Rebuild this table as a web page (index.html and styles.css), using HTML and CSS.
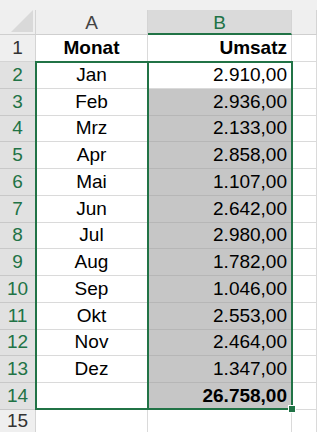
FILE: index.html
```html
<!DOCTYPE html>
<html lang="de">
<head>
<meta charset="utf-8">
<title>Umsatz</title>
<link rel="stylesheet" href="styles.css">
</head>
<body>
<div class="wrap">
  <div class="sheet">
    <div class="strip"></div>

    <div class="corner"><svg class="tri" width="22" height="22" viewBox="0 0 22 22"><polygon points="22,0 22,22 0,22" fill="#d9d9d9"/></svg></div>
    <div class="colhead">A</div>
    <div class="colhead sel">B</div>
    <div class="colhead"></div>

    <div class="rowhead">1</div>
    <div class="cell c b hline">Monat</div>
    <div class="cell r b hline">Umsatz</div>
    <div class="cell"></div>

    <div class="rowhead on">2</div><div class="cell c">Jan</div><div class="cell r">2.910,00</div><div class="cell"></div>
    <div class="rowhead on">3</div><div class="cell c">Feb</div><div class="cell r g">2.936,00</div><div class="cell"></div>
    <div class="rowhead on">4</div><div class="cell c">Mrz</div><div class="cell r g">2.133,00</div><div class="cell"></div>
    <div class="rowhead on">5</div><div class="cell c">Apr</div><div class="cell r g">2.858,00</div><div class="cell"></div>
    <div class="rowhead on">6</div><div class="cell c">Mai</div><div class="cell r g">1.107,00</div><div class="cell"></div>
    <div class="rowhead on">7</div><div class="cell c">Jun</div><div class="cell r g">2.642,00</div><div class="cell"></div>
    <div class="rowhead on">8</div><div class="cell c">Jul</div><div class="cell r g">2.980,00</div><div class="cell"></div>
    <div class="rowhead on">9</div><div class="cell c">Aug</div><div class="cell r g">1.782,00</div><div class="cell"></div>
    <div class="rowhead on">10</div><div class="cell c">Sep</div><div class="cell r g">1.046,00</div><div class="cell"></div>
    <div class="rowhead on">11</div><div class="cell c">Okt</div><div class="cell r g">2.553,00</div><div class="cell"></div>
    <div class="rowhead on">12</div><div class="cell c">Nov</div><div class="cell r g">2.464,00</div><div class="cell"></div>
    <div class="rowhead on">13</div><div class="cell c">Dez</div><div class="cell r g">1.347,00</div><div class="cell"></div>
    <div class="rowhead on">14</div><div class="cell c"></div><div class="cell r g b">26.758,00</div><div class="cell"></div>

    <div class="rowhead">15</div><div class="cell"></div><div class="cell"></div><div class="cell"></div>
  </div>

  <div class="sheet overlay">
    <div class="selbox sel-a"></div>
    <div class="selbox sel-b"><span class="handle"></span></div>
  </div>
</div>
</body>
</html>
```

FILE: styles.css
```css
html, body {
  margin: 0;
  padding: 0;
  background: #ffffff;
  overflow: hidden;
}

.wrap {
  position: relative;
  width: 317px;
  height: 432px;
  overflow: hidden;
}

.sheet {
  width: 317px;
  height: 432px;
  display: grid;
  grid-template-columns: 36px 112px 144px 1fr;
  grid-template-rows: 10px 25px 27px repeat(13, 26.77px) 1fr;
  font-family: "Liberation Sans", Arial, sans-serif;
  font-size: 19px;
  color: #000;
}

.overlay {
  position: absolute;
  left: 0;
  top: 0;
  pointer-events: none;
}

.strip {
  grid-column: 1 / -1;
  background: #f0f0f0;
}

.corner {
  background: #efefef;
  border-right: 1px solid #d4d4d4;
  border-bottom: 1px solid #cfcfcf;
  box-sizing: border-box;
  display: flex;
  justify-content: flex-end;
  align-items: flex-end;
  padding: 0 2px 2px 0;
}

.tri {
  display: block;
}

.colhead {
  background: #efefef;
  border-right: 1px solid #d4d4d4;
  border-bottom: 1px solid #cfcfcf;
  box-sizing: border-box;
  display: flex;
  align-items: center;
  justify-content: center;
  color: #444;
  padding-top: 2px;
}

.colhead.sel {
  background: #dadada;
  color: #217346;
  border-bottom: 2px solid #217346;
}

.rowhead {
  background: #efefef;
  border-right: 1px solid #d4d4d4;
  border-bottom: 1px solid #d4d4d4;
  box-sizing: border-box;
  display: flex;
  align-items: flex-end;
  justify-content: center;
  padding-bottom: 2px;
  color: #333;
}

.rowhead.on {
  background: #e1e1e1;
  color: #217346;
  border-bottom-color: #c8c8c8;
}

.cell {
  background: #fff;
  border-right: 1px solid #dadada;
  border-bottom: 1px solid #dadada;
  box-sizing: border-box;
  display: flex;
  align-items: flex-end;
  padding: 0 4px 2px 4px;
  white-space: nowrap;
  overflow: hidden;
}

.c { justify-content: center; }
.r { justify-content: flex-end; }
.b { font-weight: bold; }

.hline {
  border-bottom: 1px solid #000;
}

.g {
  background: #c6c6c6;
  border-right-color: #b6b6b6;
  border-bottom-color: #b6b6b6;
}

.selbox {
  grid-row: 4 / 17;
  border: 2px solid #217346;
  box-sizing: border-box;
  margin: -1px -1px 0 -1px;
  position: relative;
}

.sel-a { grid-column: 2; }
.sel-b { grid-column: 3; }

.handle {
  position: absolute;
  right: -5px;
  bottom: -5px;
  width: 6px;
  height: 6px;
  background: #217346;
  border: 1px solid #fff;
}
```
